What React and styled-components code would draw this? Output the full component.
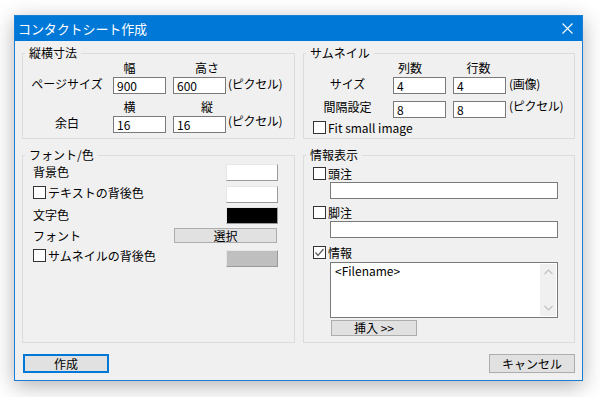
import React from 'react';
import styled, { createGlobalStyle } from 'styled-components';

const FONT = `"Noto Sans CJK JP", "Noto Sans", "Liberation Sans", sans-serif`;

const GlobalStyle = createGlobalStyle`
  html, body { margin: 0; padding: 0; background: #ffffff; }
  body { font-family: ${FONT}; font-size: 12px; color: #000; }
  *, *::before, *::after { box-sizing: border-box; }
`;

const Page = styled.div`
  width: 600px;
  height: 397px;
  padding: 15px 0 0 14px;
  overflow: hidden;
`;

const Window = styled.div`
  width: 569px;
  height: 366px;
  border: 1px solid #1a7fd4;
  background: #f0f0f0;
  box-shadow: 0 5px 20px rgba(0, 0, 0, 0.3);
  display: flex;
  flex-direction: column;
`;

const TitleBar = styled.div`
  height: 25px;
  flex: none;
  background: #0078d7;
  color: #ffffff;
  display: flex;
  align-items: center;
  justify-content: space-between;
  padding-left: 3px;
`;

const TitleText = styled.span`
  font-size: 13px;
  line-height: 25px;
  letter-spacing: -0.1px;
`;

const CloseButton = styled.div`
  width: 30px;
  height: 25px;
  display: flex;
  align-items: center;
  justify-content: center;
`;

const Content = styled.div`
  flex: 1;
  display: flex;
  flex-direction: column;
  padding: 5px 7px 7px 7px;
`;

const Groups = styled.div`
  display: grid;
  grid-template-columns: 273px 272px;
  grid-template-rows: 93px 195px;
  column-gap: 8px;
  row-gap: 9px;
`;

const Group = styled.fieldset`
  margin: 0;
  padding: 0;
  border: 1px solid #dcdcdc;
  min-width: 0;
  height: 100%;
`;

const Legend = styled.legend`
  margin-left: 2px;
  padding: 0 4px;
  font-size: 12px;
  line-height: 14px;
`;

const FormGrid = styled.div`
  display: grid;
  grid-template-columns: ${p => p.$cols};
  grid-template-rows: ${p => p.$rows};
  align-items: start;
  padding-top: 1px;
`;

const Header = styled.div`
  width: ${p => p.$w}px;
  margin-top: ${p => p.$mt || 0}px;
  text-align: center;
  line-height: 14px;
  white-space: nowrap;
`;

const RowLabel = styled.div`
  width: ${p => p.$w}px;
  margin-top: ${p => p.$mt || 0}px;
  text-align: center;
  line-height: 14px;
  white-space: nowrap;
`;

const Unit = styled.div`
  margin-top: ${p => p.$mt || 0}px;
  line-height: 14px;
  white-space: nowrap;
  letter-spacing: -0.3px;
`;

const TextBox = styled.input`
  display: block;
  width: ${p => p.$w || 53}px;
  height: 17px;
  margin: ${p => p.$mt || 0}px 0 0 ${p => p.$ml || 0}px;
  padding: 0 0 0 3px;
  border: 1px solid #7a7a7a;
  background: #ffffff;
  font-family: ${FONT};
  font-size: 12px;
  color: #000;
  outline: none;
`;

const CheckRow = styled.div`
  display: flex;
  align-items: center;
  gap: 2px;
  height: 13px;
  margin-top: ${p => p.$mt || 0}px;
  margin-left: ${p => p.$ml || 0}px;
  grid-column: ${p => p.$span || 'auto'};
  line-height: 13px;
  white-space: nowrap;
`;

const Box = styled.span`
  width: 13px;
  height: 13px;
  flex: none;
  border: 1px solid #333333;
  background: #ffffff;
  display: flex;
  align-items: center;
  justify-content: center;
`;

const ColorGrid = styled.div`
  display: grid;
  grid-template-columns: 1fr auto;
  grid-template-rows: 18px 17px 17px 17px 17px;
  row-gap: 4px;
  align-items: start;
  padding: 2px 16px 0 10px;
`;

const Label = styled.div`
  line-height: 16px;
  white-space: nowrap;
`;

const Swatch = styled.div`
  width: 52px;
  height: 17px;
  justify-self: end;
  background: ${p => p.$color};
  border: 1px solid;
  border-color: #e6e6e6 #9a9a9a #9a9a9a #e6e6e6;
`;

const PushButton = styled.div`
  width: ${p => p.$w}px;
  height: ${p => p.$h}px;
  margin: ${p => p.$mt || 0}px ${p => p.$mr || 0}px 0 ${p => p.$ml || 0}px;
  justify-self: end;
  background: #e1e1e1;
  border: 1px solid #adadad;
  display: flex;
  align-items: center;
  justify-content: center;
  line-height: 1;
  white-space: nowrap;
`;

const InfoBody = styled.div`
  display: flex;
  flex-direction: column;
  align-items: flex-start;
  padding: 5px 16px 0 9px;
`;

const MemoBox = styled.div`
  width: 228px;
  height: 56px;
  margin: 3px 0 0 17px;
  border: 1px solid #7a7a7a;
  background: #ffffff;
  display: flex;
`;

const MemoText = styled.div`
  flex: 1;
  padding: 1px 0 0 4px;
  line-height: 14px;
`;

const ScrollBar = styled.div`
  width: 16px;
  margin: 1px 1px 1px 0;
  background: #f0f0f0;
  display: flex;
  flex-direction: column;
  justify-content: space-between;
  align-items: center;
  padding: 5px 0 5px;
`;

const Footer = styled.div`
  display: flex;
  justify-content: space-between;
  margin-top: 11px;
  padding: 0 0 0 1px;
`;

const DialogButton = styled.div`
  width: 86px;
  height: 19px;
  background: #e1e1e1;
  border: ${p => (p.$primary ? '2px solid #0078d7' : '1px solid #adadad')};
  display: flex;
  align-items: center;
  justify-content: center;
  line-height: 1;
`;

const CloseIcon = () => (
  <svg width="11" height="11" viewBox="0 0 11 11">
    <path d="M0.5 0.5 L10.5 10.5 M10.5 0.5 L0.5 10.5" stroke="#ffffff" strokeWidth="1.1" fill="none" />
  </svg>
);

const CheckMark = () => (
  <svg width="11" height="11" viewBox="0 0 11 11">
    <polyline points="1.5,5.5 4,8.5 9.5,2" stroke="#5a5a5a" strokeWidth="1.2" fill="none" />
  </svg>
);

const Chevron = ({ up }) => (
  <svg width="9" height="6" viewBox="0 0 9 6">
    <polyline
      points={up ? '0.5,5 4.5,1 8.5,5' : '0.5,1 4.5,5 8.5,1'}
      stroke="#c2c2c2"
      strokeWidth="1.2"
      fill="none"
    />
  </svg>
);

const Check = ({ checked, children, ...rest }) => (
  <CheckRow {...rest}>
    <Box>{checked && <CheckMark />}</Box>
    <span>{children}</span>
  </CheckRow>
);

export default function App() {
  return (
    <>
      <GlobalStyle />
      <Page>
        <Window>
          <TitleBar>
            <TitleText>コンタクトシート作成</TitleText>
            <CloseButton>
              <CloseIcon />
            </CloseButton>
          </TitleBar>
          <Content>
            <Groups>
              <Group>
                <Legend>縦横寸法</Legend>
                <FormGrid $cols="90px 60px 55px auto" $rows="16px 17px 22px 17px">
                  <div />
                  <Header $w={33}>幅</Header>
                  <Header $w={68}>高さ</Header>
                  <div />

                  <RowLabel $w={88}>ページサイズ</RowLabel>
                  <TextBox readOnly defaultValue="900" />
                  <TextBox readOnly defaultValue="600" />
                  <Unit>(ピクセル)</Unit>

                  <div />
                  <Header $w={33} $mt={6}>横</Header>
                  <Header $w={68} $mt={6}>縦</Header>
                  <div />

                  <RowLabel $w={88}>余白</RowLabel>
                  <TextBox readOnly defaultValue="16" />
                  <TextBox readOnly defaultValue="16" />
                  <Unit $mt={-2}>(ピクセル)</Unit>
                </FormGrid>
              </Group>

              <Group>
                <Legend>サムネイル</Legend>
                <FormGrid $cols="89px 60px 56px auto" $rows="16px 17px 24px 16px">
                  <div />
                  <Header $w={34}>列数</Header>
                  <Header $w={51}>行数</Header>
                  <div />

                  <RowLabel $w={87}>サイズ</RowLabel>
                  <TextBox readOnly defaultValue="4" />
                  <TextBox readOnly defaultValue="4" />
                  <Unit>(画像)</Unit>

                  <RowLabel $w={87} $mt={6}>間隔設定</RowLabel>
                  <TextBox readOnly defaultValue="8" $mt={7} />
                  <TextBox readOnly defaultValue="8" $mt={7} />
                  <Unit $mt={5}>(ピクセル)</Unit>

                  <Check $span="1 / -1" $mt={3} $ml={9}>Fit small image</Check>
                </FormGrid>
              </Group>

              <Group>
                <Legend>フォント/色</Legend>
                <ColorGrid>
                  <Label>背景色</Label>
                  <Swatch $color="#ffffff" />

                  <Check>テキストの背後色</Check>
                  <Swatch $color="#ffffff" />

                  <Label>文字色</Label>
                  <Swatch $color="#000000" />

                  <Label>フォント</Label>
                  <PushButton $w={103} $h={15} $mr={1}>選択</PushButton>

                  <Check>サムネイルの背後色</Check>
                  <Swatch $color="#bfbfbf" style={{ marginTop: 1 }} />
                </ColorGrid>
              </Group>

              <Group>
                <Legend>情報表示</Legend>
                <InfoBody>
                  <Check>頭注</Check>
                  <TextBox readOnly defaultValue="" $w={228} $mt={2} $ml={17} />
                  <Check $mt={7}>脚注</Check>
                  <TextBox readOnly defaultValue="" $w={228} $mt={2} $ml={17} />
                  <Check $mt={8} checked>情報</Check>
                  <MemoBox>
                    <MemoText>&lt;Filename&gt;</MemoText>
                    <ScrollBar>
                      <Chevron up />
                      <Chevron />
                    </ScrollBar>
                  </MemoBox>
                  <PushButton $w={86} $h={16} $mt={2} $ml={18}>挿入 &gt;&gt;</PushButton>
                </InfoBody>
              </Group>
            </Groups>

            <Footer>
              <DialogButton $primary>作成</DialogButton>
              <DialogButton>キャンセル</DialogButton>
            </Footer>
          </Content>
        </Window>
      </Page>
    </>
  );
}
